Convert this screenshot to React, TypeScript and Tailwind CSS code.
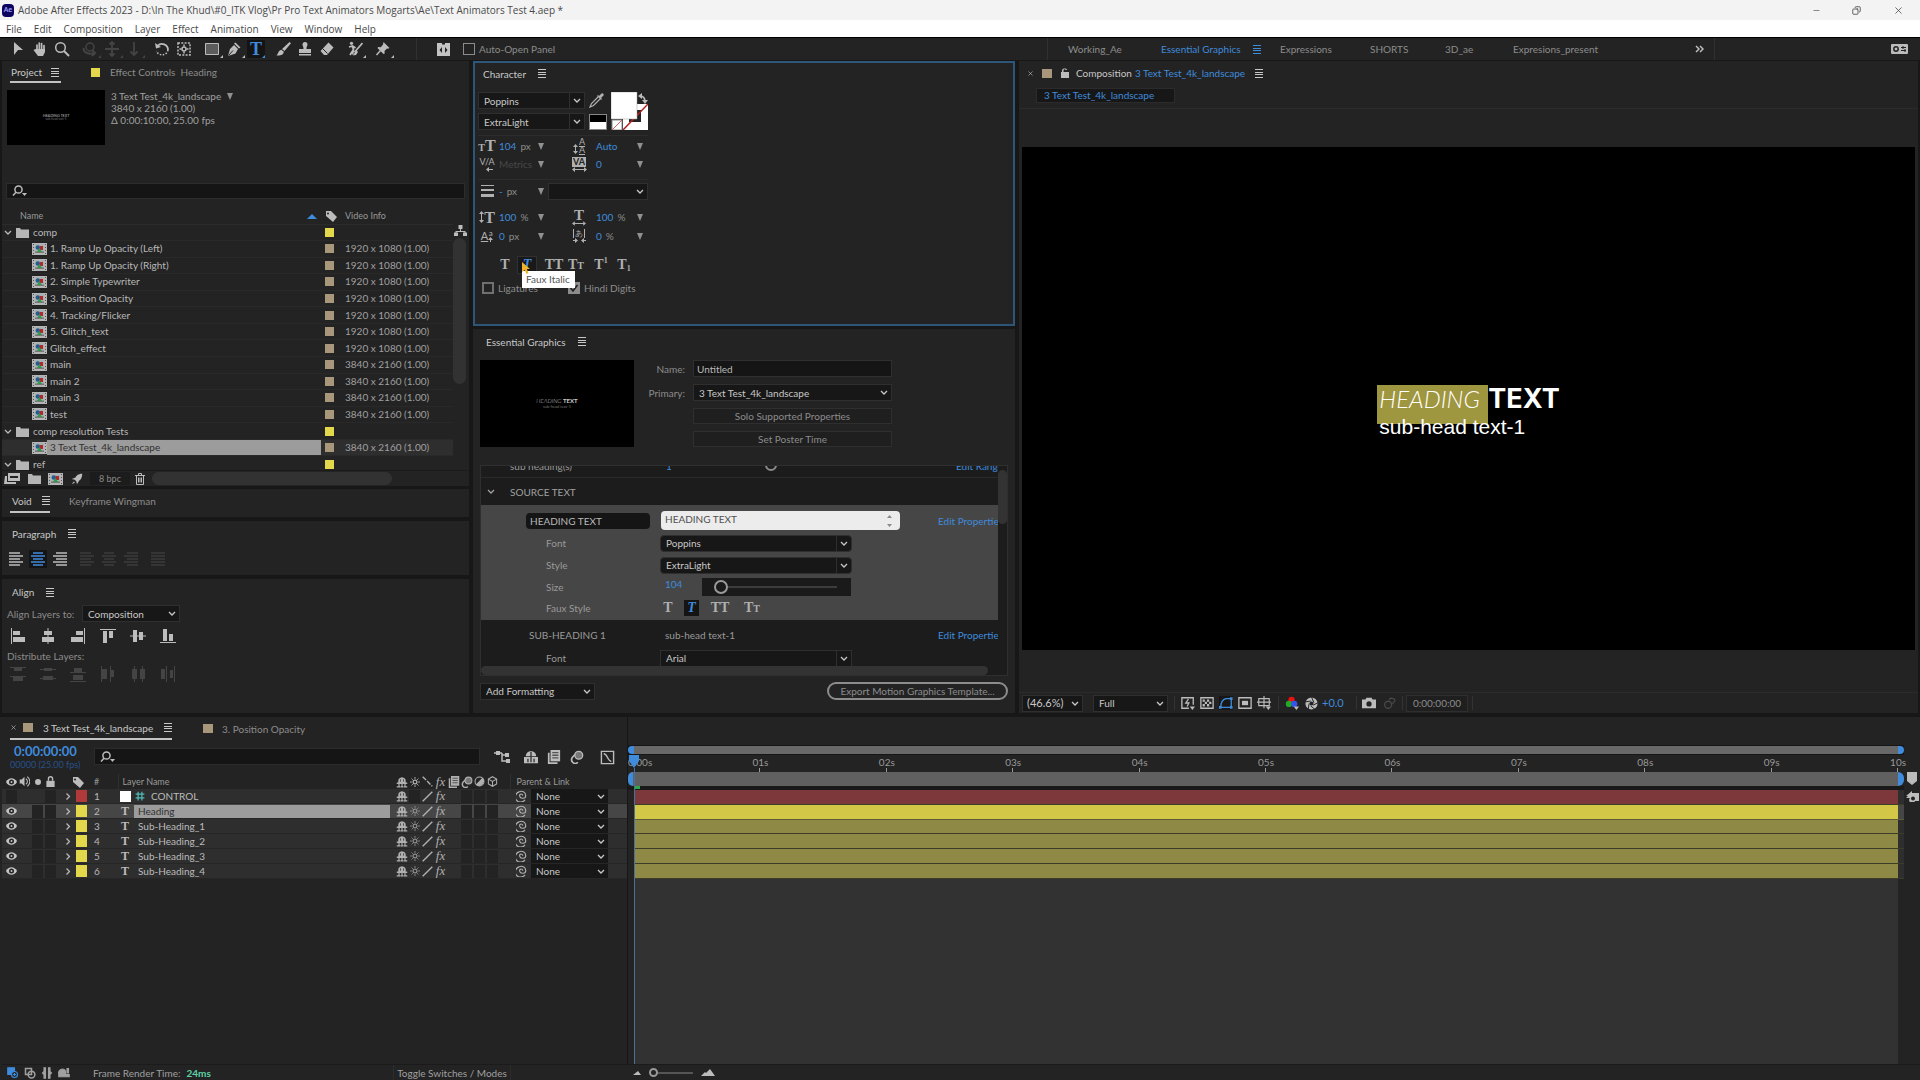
import { useState, type ReactNode } from "react";
import clsx from "clsx";
import { Minus, Copy, X } from "lucide-react";

const UI = "font-['Lato','Noto_Sans',sans-serif]";
const BLUE = "text-[#3f8bdc]";
const SERIF = "font-['Liberation_Serif',serif]";

interface SvgProps {
  children: ReactNode;
  className?: string;
  size?: number;
}

function Svg({ children, className, size = 16 }: SvgProps) {
  return (
    <svg
      width={size}
      height={size}
      viewBox="0 0 16 16"
      fill="none"
      stroke="currentColor"
      strokeWidth="1.5"
      className={clsx("shrink-0", className)}
      aria-hidden="true"
    >
      {children}
    </svg>
  );
}

function Chevron({ className }: { className?: string }) {
  return (
    <svg width="8" height="5" viewBox="0 0 8 5" fill="none" stroke="currentColor" strokeWidth="1.3" className={clsx("shrink-0", className)}>
      <path d="M1 1l3 3 3-3" />
    </svg>
  );
}

function Caret() {
  return (
    <svg width="6" height="7" viewBox="0 0 6 7" fill="currentColor" className="shrink-0 text-[#909090]">
      <path d="M0 0h6L3 7z" />
    </svg>
  );
}

function PanelMenu({ className }: { className?: string }) {
  return (
    <button aria-label="Panel menu" className={clsx("shrink-0", className)}>
      <svg width="8" height="9" viewBox="0 0 8 9" fill="currentColor">
        <path d="M0 0h8v1H0zM0 3h8v1H0zM0 5h8v1H0zM0 8h8v1H0z" />
      </svg>
    </button>
  );
}

interface SelectProps {
  label: string;
  value: string;
  className?: string;
  split?: boolean;
  textClass?: string;
}

function Select({ label, value, className, split, textClass = "pl-[5px]" }: SelectProps) {
  return (
    <div className={clsx("relative h-[17px] shrink-0 border border-[#2f2f2f] bg-[#171717] text-[#c8c8c8]", className)}>
      <select aria-label={label} defaultValue={value} className={clsx("block h-full w-full appearance-none bg-transparent leading-[14px] outline-none", textClass)}>
        <option>{value}</option>
      </select>
      <span className={clsx("pointer-events-none absolute inset-y-0 right-0 flex w-[15px] items-center justify-center", split && "border-l border-[#2f2f2f]")}>
        <Chevron />
      </span>
    </div>
  );
}

function SearchIcon() {
  return (
    <svg width="16" height="12" viewBox="0 0 16 12" fill="none" stroke="#bcbcbc" strokeWidth="1.5" aria-hidden="true">
      <circle cx="6.5" cy="4.5" r="3.6" />
      <path d="M4 7.2L1 10.6" />
      <path d="M10 8h5l-2.5 3z" fill="#bcbcbc" stroke="none" />
    </svg>
  );
}

function TagIcon() {
  return (
    <svg width="12" height="12" viewBox="0 0 12 12" fill="#bcbcbc" aria-hidden="true">
      <path fillRule="evenodd" d="M1 1l5 0 6 6-4 5-7-6zM3 2.4a1 1 0 100 2 1 1 0 000-2z" />
    </svg>
  );
}

function FolderIcon() {
  return (
    <svg width="13" height="11" viewBox="0 0 13 11" fill="#b5b5b5" aria-hidden="true" className="shrink-0">
      <path d="M0 1h4l1 1.5h8V11H0z" />
    </svg>
  );
}

function CompIcon() {
  return (
    <svg width="15" height="12" viewBox="0 0 15 12" aria-hidden="true" className="shrink-0">
      <path fill="#b5b5b5" d="M0 0h15v12H0z" />
      <path fill="#555" d="M1 1h1v1H1zM1 4h1v1H1zM1 7h1v1H1zM1 10h1v1H1zM13 1h1v1h-1zM13 4h1v1h-1zM13 7h1v1h-1zM13 10h1v1h-1z" />
      <path fill="#a9b0b4" d="M3 1h9v9H3z" />
      <path fill="#777" d="M3 8.5h9V10H3z" />
      <circle cx="5.8" cy="4.5" r="2.2" fill="#1f5f92" />
      <path fill="#b02a2a" d="M7.5 3H11v4H7.5z" />
      <path fill="#2f9a4a" d="M7.5 5L10 9H5z" />
    </svg>
  );
}

// ---------- window chrome ----------

function TitleBar() {
  return (
    <header className="font-['Open_Sans','Noto_Sans',sans-serif]">
      <div className="flex h-5 items-center bg-[#f3f3f3] pl-0.5 text-[#4a4a4a]">
        <span className="flex h-[13px] w-3 items-center justify-center rounded-sm bg-[#0c0560] text-[7px] font-semibold text-[#a9a5ff]">Ae</span>
        <h1 className="ml-1 flex-1 text-[10px] leading-5">Adobe After Effects 2023 - D:\In The Khud\#0_ITK Vlog\Pr Pro Text Animators Mogarts\Ae\Text Animators Test 4.aep *</h1>
        <div className="flex items-center text-[#333]">
          <button aria-label="Minimize" className="flex w-10 justify-center"><Minus size={9} strokeWidth={1.5} /></button>
          <button aria-label="Restore" className="flex w-10 justify-center"><Copy size={9} strokeWidth={2} className="-scale-x-100" /></button>
          <button aria-label="Close" className="flex w-11 justify-center"><X size={11} strokeWidth={1.5} /></button>
        </div>
      </div>
      <nav className="flex h-[17px] items-center gap-3 bg-white pl-1.5 text-[10px] leading-4 text-[#4a4a4a]">
        {["File", "Edit", "Composition", "Layer", "Effect", "Animation", "View", "Window", "Help"].map((m) => (
          <button key={m}>{m}</button>
        ))}
      </nav>
    </header>
  );
}

interface ToolProps {
  label: string;
  children: ReactNode;
  dim?: boolean;
  active?: boolean;
  more?: boolean;
  className?: string;
}

function Tool({ label, children, dim, active, more, className = "w-[22px]" }: ToolProps) {
  return (
    <button
      aria-label={label}
      title={label}
      className={clsx(
        "relative flex h-[18px] shrink-0 items-center justify-center",
        dim ? "text-[#444]" : active ? "bg-[#141414] text-[#3f8bdc]" : "text-[#bcbcbc]",
        className,
      )}
    >
      {children}
      {more && (
        <svg width="3" height="3" viewBox="0 0 3 3" fill="currentColor" className="absolute right-0 bottom-0">
          <path d="M3 0v3H0z" />
        </svg>
      )}
    </button>
  );
}

const WORKSPACES = [
  { name: "Working_Ae", width: "w-[93px]" },
  { name: "Essential Graphics", width: "w-[119px]", active: true },
  { name: "Expressions", width: "w-[90px]" },
  { name: "SHORTS", width: "w-[75px]" },
  { name: "3D_ae", width: "w-[68px]" },
  { name: "Expresions_present", width: "w-[100px]" },
];

function Toolbar() {
  return (
    <div className="flex h-[23px] items-center border-t border-black bg-[#232323]">
      <div className="flex items-center pl-[7px]">
        <Tool label="Selection Tool">
          <Svg><path d="M4 1l9 8H8l-4 5z" fill="currentColor" stroke="none" /></Svg>
        </Tool>
        <Tool label="Hand Tool">
          <Svg>
            <path d="M5 9V4M7.3 8V2M9.6 8V2.5M12 9V4.5" strokeWidth="1.7" strokeLinecap="round" />
            <path d="M4 8h9v3l-2 4H6L1.5 9l1.5-.8z" fill="currentColor" stroke="none" />
          </Svg>
        </Tool>
        <Tool label="Zoom Tool">
          <Svg><circle cx="6.5" cy="6.5" r="4.8" /><path d="M10 10l5 5" strokeWidth="2" /></Svg>
        </Tool>
        <Tool label="Orbit Tool" dim more className="ml-1.5 w-[22px]">
          <Svg><circle cx="8" cy="6" r="4" /><path d="M2 7c-2 4 5 7 10 5M10 9l3 3-3 3" strokeWidth="2" /></Svg>
        </Tool>
        <Tool label="Pan Camera Tool" dim more>
          <Svg><path d="M8 1v14M1 8h14M5.5 3.5L8 1l2.5 2.5M5.5 12.5L8 15l2.5-2.5" strokeWidth="1.8" /></Svg>
        </Tool>
        <Tool label="Dolly Tool" dim more>
          <Svg><path d="M8 1v13M4.5 10.5L8 14l3.5-3.5" strokeWidth="1.8" /></Svg>
        </Tool>
        <Tool label="Rotation Tool" className="ml-1.5 w-[22px]">
          <Svg>
            <path d="M3.5 5A6 6 0 0114 9" strokeWidth="1.8" />
            <path d="M14 9A6 6 0 012.5 10" strokeDasharray="1.5 1.5" />
            <path d="M1 2l1 5.5L7 6z" fill="currentColor" stroke="none" />
          </Svg>
        </Tool>
        <Tool label="Pan Behind Tool">
          <Svg>
            <path d="M2 2h12v12H2z" strokeDasharray="2 1.3" />
            <circle cx="8" cy="8" r="2" />
            <path d="M8 3.5v2M8 10.5v2M3.5 8h2M10.5 8h2" />
          </Svg>
        </Tool>
        <Tool label="Rectangle Tool" more className="ml-1.5 w-[22px]">
          <Svg><path d="M1.5 2.5h13v11h-13z" fill="#5c5c5c" strokeWidth="1" /></Svg>
        </Tool>
        <Tool label="Pen Tool" more>
          <Svg>
            <path d="M9.5 1.5l5 5-1.5 1-5-5zM8 4l4 4-2.5 4.5L2 15l2-7z" fill="currentColor" stroke="none" />
            <path d="M2.5 14.5l4.5-5" stroke="#232323" strokeWidth="1" />
          </Svg>
        </Tool>
        <Tool label="Type Tool" active more className="ml-0.5 w-[18px]">
          <span className={clsx(SERIF, "text-[18px] leading-4 font-bold")}>T</span>
        </Tool>
        <Tool label="Brush Tool" className="ml-[7px] w-[22px]">
          <Svg><path d="M14.5 1L16 2.2 9.5 10 7 8zM6.3 8.8l2.5 2C8.5 14 5 15 1.5 14.5 3.5 13 3 9.5 6.3 8.8z" fill="currentColor" stroke="none" /></Svg>
        </Tool>
        <Tool label="Clone Stamp Tool">
          <Svg><path d="M8 1a2.5 2.5 0 012.5 2.5C10.5 5 9.5 5 9.5 8H14v4H2V8h4.5c0-3-1-3-1-4.5A2.5 2.5 0 018 1zM2 13h12v1.5H2z" fill="currentColor" stroke="none" /></Svg>
        </Tool>
        <Tool label="Eraser Tool">
          <Svg><path d="M9.5 1.5l5 5L8 14H5L1.5 10z" fill="currentColor" stroke="none" /><path d="M3.5 7.5l5 5" stroke="#232323" strokeWidth="1" /></Svg>
        </Tool>
        <Tool label="Roto Brush Tool" more className="ml-1.5 w-[22px]">
          <Svg>
            <path d="M15.5 2L9 9.5 7.5 11M5 4.5l1.5 4-1 5M2 6l3.5-1 3 2M6.5 8.5L3 14" strokeWidth="1.7" />
            <circle cx="4.5" cy="2.3" r="1.6" fill="currentColor" stroke="none" />
            <path d="M9 9l2 2-2 3-3 .5z" fill="currentColor" stroke="none" />
          </Svg>
        </Tool>
        <Tool label="Puppet Pin Tool" more className="ml-1.5 w-[22px]">
          <Svg><path d="M8.5 1l6 6-1.5.8-1-.3L9.5 10l.2 2.5L8.5 13l-6-6 .8-1 2.5.2L8 3.500z" fill="currentColor" stroke="none" /><path d="M5.5 9.500L1.500 14" /></Svg>
        </Tool>
      </div>
      <div className="ml-[22px] h-full w-px bg-[#303030]" />
      <button aria-label="Tool panel" className="ml-5">
        <svg width="13" height="13" viewBox="0 0 13 13" fill="#c4c4c4">
          <path fillRule="evenodd" d="M0 0h5v1.5h3V0h5v13H0zM5 4L2.5 7 5 10zM8 4v6l2.500-3z" />
        </svg>
      </button>
      <label className="ml-[13px] flex items-center gap-1 text-[#8c8c8c]">
        <input type="checkbox" className="size-3 appearance-none border border-[#8c8c8c]" />
        Auto-Open Panel
      </label>
      <div className="flex-1" />
      {/* workspace switcher keeps its distance from the right edge */}
      <nav className="flex h-full w-[873px] shrink-0 items-center border-l border-[#303030] pl-5 text-[#8c8c8c]">
        {WORKSPACES.map((w) => (
          <span key={w.name} className={clsx("flex items-center justify-between", w.width)}>
            <button className={w.active ? BLUE : undefined}>{w.name}</button>
            {w.active && <PanelMenu className="mr-[19px] text-[#3f8bdc]" />}
          </span>
        ))}
        <button aria-label="More workspaces" className="ml-auto text-[#bcbcbc]">
          <svg width="9" height="8" viewBox="0 0 9 8" fill="none" stroke="currentColor" strokeWidth="1.5"><path d="M1 1l3 3-3 3M5 1l3 3-3 3" /></svg>
        </button>
        <div className="ml-2.5 h-full w-px bg-[#303030]" />
        <button aria-label="Sync settings" className="mr-3 ml-[176px]">
          <svg width="17" height="10" viewBox="0 0 17 10">
            <rect width="17" height="10" rx="1" fill="#bcbcbc" />
            <circle cx="5" cy="5" r="2.2" fill="none" stroke="#232323" strokeWidth="1.5" />
            <path d="M10 3.5h5M10 6.5h5M12 2v3M14 5v3" stroke="#232323" />
          </svg>
        </button>
      </nav>
    </div>
  );
}

// ---------- left column ----------

type Item = { name: string; kind: "folder" | "comp"; info?: string; selected?: boolean };

const HD = "1920 x 1080 (1.00)";
const UHD = "3840 x 2160 (1.00)";

const ITEMS: Item[] = [
  { name: "comp", kind: "folder" },
  { name: "1. Ramp Up Opacity (Left)", kind: "comp", info: HD },
  { name: "1. Ramp Up Opacity (Right)", kind: "comp", info: HD },
  { name: "2. Simple Typewriter", kind: "comp", info: HD },
  { name: "3. Position Opacity", kind: "comp", info: HD },
  { name: "4. Tracking/Flicker", kind: "comp", info: HD },
  { name: "5. Glitch_text", kind: "comp", info: HD },
  { name: "Glitch_effect", kind: "comp", info: HD },
  { name: "main", kind: "comp", info: UHD },
  { name: "main 2", kind: "comp", info: UHD },
  { name: "main 3", kind: "comp", info: UHD },
  { name: "test", kind: "comp", info: UHD },
  { name: "comp resolution Tests", kind: "folder" },
  { name: "3 Text Test_4k_landscape", kind: "comp", info: UHD, selected: true },
  { name: "ref", kind: "folder" },
];

function ProjectRow({ item }: { item: Item }) {
  const folder = item.kind === "folder";
  return (
    <tr className={clsx("border-b border-[#292929]", item.selected && "bg-[#2e2e2e]")}>
      <td className="p-0">
        <div className={clsx("flex items-center text-[#b8b8b8]", folder ? "pl-0.5" : "pl-[30px]")}>
          {folder && <Chevron className="mr-1" />}
          {folder ? <FolderIcon /> : <CompIcon />}
          <span className={clsx("flex-1 leading-[15px]", folder ? "pl-1" : "pl-[3px]", item.selected && "mr-1 bg-[#9c9c9c] text-[#303030]")}>{item.name}</span>
        </div>
      </td>
      <td className="p-0">
        <span className={clsx("block size-[9px]", folder ? "bg-[#e3d84c]" : "bg-[#a8977a]")} />
      </td>
      <td className="p-0 leading-[15px] text-[#a0a0a0]">{item.info}</td>
    </tr>
  );
}

function ProjectPanel() {
  return (
    <section className="flex h-[425px] flex-col bg-[#232323]">
      <div className="flex h-[22px] items-center px-2">
        <div className="flex h-[22px] w-[51px] items-center justify-between border-b-2 border-[#c4c4c4] pt-0.5 pr-0.5 pl-px text-[#c8c8c8]">
          Project <PanelMenu />
        </div>
        <span className="ml-[30px] size-[9px] bg-[#e3d84c]" />
        <span className="ml-2.5 text-[#8c8c8c]">Effect Controls&nbsp; Heading</span>
      </div>
      <div className="mt-[7px] flex h-[55px] px-[5px]">
        <div className="flex w-[98px] flex-col items-center justify-center bg-black text-[4px] leading-[4px] text-[#bbb]">
          <span className="italic">HEADING TEXT</span>
          <span className="text-[3px] leading-[3px] text-[#777]">sub-head text-1</span>
        </div>
        <div className="ml-1.5 leading-[12px] text-[#a0a0a0]">
          <button className="flex items-center gap-1.5">3 Text Test_4k_landscape <Caret /></button>
          <p>3840 x 2160 (1.00)</p>
          <p>Δ 0:00:10:00, 25.00 fps</p>
        </div>
      </div>
      <label className="mx-1 mt-[38px] flex h-4 items-center border border-[#2c2c2c] bg-[#151515] pl-[5px]">
        <SearchIcon />
        <input aria-label="Search project" className="min-w-0 flex-1 bg-transparent outline-none" />
      </label>
      <div className="mt-2.5 flex min-h-0 flex-1">
        <div className="min-w-0 flex-1 overflow-hidden">
          <table className="h-[264px] w-full table-fixed border-collapse">
            <colgroup>
              <col />
              <col className="w-5" />
              <col className="w-[108px]" />
            </colgroup>
            <thead>
              <tr className="h-[15px] border-b border-[#2b2b2b] text-left text-[9px] text-[#999]">
                <th className="p-0 pl-[18px] font-normal">
                  <span className="flex items-center justify-between">
                    Name
                    <svg width="10" height="5" viewBox="0 0 10 5" fill="#3f8bdc" className="mr-2"><path d="M5 0l5 5H0z" /></svg>
                  </span>
                </th>
                <th aria-label="Label" className="p-0"><TagIcon /></th>
                <th className="p-0 font-normal">Video Info</th>
              </tr>
            </thead>
            <tbody>
              {ITEMS.map((item) => (
                <ProjectRow key={item.name} item={item} />
              ))}
            </tbody>
          </table>
        </div>
        <div className="w-4 pt-4">
          <svg width="13" height="11" viewBox="0 0 13 11" fill="#bcbcbc" className="ml-px">
            <path d="M4.5 0h4v4H7v2h4.5v1.5H13V11H9V7.5h1.5V7h-8v.5H4V11H0V7.500h1.500V6H6V4H4.500z" />
          </svg>
          <div className="mt-0.5 h-[146px] w-[13px] rounded-full bg-[#323232]" />
        </div>
      </div>
      <div className="flex h-4 items-center border-t border-[#1b1b1b] pl-0.5 text-[#bcbcbc]">
        <button aria-label="Interpret footage">
          <svg width="16" height="11" viewBox="0 0 16 11" fill="currentColor"><path fillRule="evenodd" d="M4 0h12v8H4zM6 3v2h8V3z" /><path d="M1 3h2v6h9v2H0z" /></svg>
        </button>
        <button aria-label="New folder" className="ml-2"><FolderIcon /></button>
        <button aria-label="New composition" className="ml-[7px]"><CompIcon /></button>
        <button aria-label="Project settings" className="ml-2">
          <Svg size={12}><path d="M15 1c-6 0-8 3-9 5L1 8l4 1 2 2 1 4 3-5c2-1 4-4 4-9zM4 11l-3 4 4-2z" fill="currentColor" stroke="none" /></Svg>
        </button>
        <button className="ml-[7px] h-[13px] w-10 bg-[#1c1c1c] text-[9px] leading-[13px] text-[#8c8c8c]">8 bpc</button>
        <button aria-label="Delete" className="ml-[5px]">
          <svg width="10" height="12" viewBox="0 0 10 12" fill="none" stroke="currentColor"><path d="M0 2.5h10M3.5 2V.5h3V2M1.5 3v8.5h7V3M3.5 4.5v5M5 4.5v5M6.5 4.5v5" /></svg>
        </button>
        <div className="ml-[7px] h-[13px] w-[240px] rounded-full bg-[#323232]" />
      </div>
    </section>
  );
}

function AlignLines({ d }: { d: string }) {
  return (
    <svg width="14" height="14" viewBox="0 0 14 14" stroke="currentColor" strokeWidth="1.3">
      <path d={d} />
    </svg>
  );
}

const LEFT_LINES = "M0 1h11M0 4h14M0 7h11M0 10h14M0 13h11";
const CENTER_LINES = "M2 1h10M0 4h14M2 7h10M0 10h14M2 13h10";
const RIGHT_LINES = "M3 1h11M0 4h14M3 7h11M0 10h14M3 13h11";

function ParagraphPanel() {
  const buttons = [
    { label: "Left align text", d: LEFT_LINES },
    { label: "Center text", d: CENTER_LINES, active: true },
    { label: "Right align text", d: RIGHT_LINES },
    { label: "Justify last left", d: LEFT_LINES, dim: true, gap: "ml-[5px]" },
    { label: "Justify last centered", d: CENTER_LINES, dim: true },
    { label: "Justify last right", d: RIGHT_LINES, dim: true },
    { label: "Justify all", d: "M0 1h14M0 4h14M0 7h14M0 10h14M0 13h14", dim: true, gap: "ml-[5px]" },
  ];
  return (
    <section className="h-[54px] bg-[#232323]">
      <PanelTitle className="h-[25px] pl-2.5">Paragraph</PanelTitle>
      <div className="flex pt-1 pl-[5px]">
        {buttons.map((b) => (
          <button
            key={b.label}
            aria-label={b.label}
            disabled={b.dim}
            className={clsx(
              "mr-1 flex h-[18px] w-[18px] items-center justify-center",
              b.gap,
              b.active ? "bg-[#151515] text-[#3f8bdc]" : b.dim ? "text-[#3c3c3c]" : "text-[#bcbcbc]",
            )}
          >
            <AlignLines d={b.d} />
          </button>
        ))}
      </div>
    </section>
  );
}

function PanelTitle({ children, className }: { children: ReactNode; className?: string }) {
  return (
    <h2 className={clsx("flex items-center gap-3 text-[#c8c8c8]", className)}>
      {children} <PanelMenu />
    </h2>
  );
}

const ALIGN = [
  "M1 0h1v16H1zM3 3h7v4H3zM3 9h12v5H3z",
  "M7.5 0h1v16h-1zM4 3h8v4H4zM2 9h12v5H2z",
  "M14 0h1v16h-1zM6 3h7v4H6zM1 9h12v5H1z",
  "M0 1h16v1H0zM3 3h4v12H3zM9 3h4v7H9z",
  "M0 7.5h16v1H0zM3 2h4v12H3zM9 4h4v8H9z",
  "M0 14h16v1H0zM3 1h4v12H3zM9 6h4v7H9z",
];
const DISTRIBUTE = [
  "M0 1h16v1H0zM4 2h8v3H4zM0 10h16v1H0zM3 11h10v4H3z",
  "M0 3h16v1H0zM4 2h8v3H4zM0 12h16v1H0zM3 10h10v4H3z",
  "M0 6h16v1H0zM4 2h8v4H4zM0 15h16v1H0zM3 9h10v5H3z",
  "M1 0h1v16H1zM2 3h5v10H2zM10 0h1v16h-1zM11 4h3v7h-3z",
  "M4 0h1v16H4zM2 3h5v10H2zM12 0h1v16h-1zM10 3h5v10h-5z",
  "M1 3h4v10H1zM6 0h1v16H6zM10 4h3v8h-3zM14 0h1v16h-1z",
];

function AlignPanel() {
  return (
    <section className="h-[134px] bg-[#232323]">
      <PanelTitle className="h-[26px] pl-2.5">Align</PanelTitle>
      <div className="flex items-center pl-[5px] text-[#8c8c8c]">
        <span className="w-[75px]">Align Layers to:</span>
        <Select label="Align layers to" value="Composition" className="w-[98px]" />
      </div>
      <div className="mt-1.5 flex gap-3.5 pl-2 text-[#bcbcbc]">
        {ALIGN.map((d) => (
          <button key={d} aria-label="Align"><Svg><path d={d} fill="currentColor" stroke="none" /></Svg></button>
        ))}
      </div>
      <p className="mt-[5px] pl-[5px] text-[#8c8c8c]">Distribute Layers:</p>
      <div className="mt-[3px] flex gap-3.5 pl-2 text-[#444]">
        {DISTRIBUTE.map((d) => (
          <button key={d} aria-label="Distribute" disabled><Svg><path d={d} fill="currentColor" stroke="none" /></Svg></button>
        ))}
      </div>
    </section>
  );
}

// ---------- middle column ----------

interface ValueProps {
  label: string;
  icon: ReactNode;
  value: string;
  unit?: string;
  dim?: boolean;
  second?: boolean;
}

function CharValue({ label, icon, value, unit, dim, second }: ValueProps) {
  return (
    <div className="flex h-[18px] items-center">
      <span className={clsx("flex w-[18px] shrink-0 justify-center text-[#b0b0b0]", second ? "mr-2" : "mr-[3px]")}>{icon}</span>
      <button aria-label={label} className={clsx(dim ? "text-[#484848]" : BLUE)}>{value}</button>
      <span className="ml-1 flex-1 text-[#8c8c8c]">{unit}</span>
      <button aria-label={`${label} presets`}><Caret /></button>
    </div>
  );
}

function SizeIcon() {
  return <span className={clsx(SERIF, "flex items-baseline leading-[15px] font-bold")}><span className="text-[10px]">T</span><span className="text-[16px]">T</span></span>;
}

function KerningIcon({ boxed }: { boxed?: boolean }) {
  return (
    <span className="flex flex-col items-center">
      <span className={clsx("text-[9px] leading-[10px]", boxed && "bg-[#b0b0b0] px-px font-bold text-[#232323]")}>{boxed ? "VA" : "V/A"}</span>
      <svg width="15" height="5" viewBox="0 0 15 5" fill="currentColor">
        {boxed ? <path d="M0 2.5L3 0v2h9V0l3 2.5L12 5V3H3v2z" /> : <path d="M7 2.5L10 0v2h4v1h-4v2z" />}
      </svg>
    </span>
  );
}

function LeadingIcon() {
  return (
    <span className="flex items-end gap-px text-[9px] leading-[8px]">
      <svg width="5" height="10" viewBox="0 0 5 10" fill="currentColor"><path d="M2.5 0L5 3H3v4h2l-2.5 3L0 7h2V3H0z" /></svg>
      <span className="flex flex-col"><u>A</u><u>A</u></span>
    </span>
  );
}

function FauxButtons() {
  return (
    <div className={clsx(SERIF, "flex items-center text-[14px] leading-4 font-bold text-[#b0b0b0]")}>
      <button aria-label="Faux Bold" className="w-5">T</button>
      <button aria-label="Faux Italic" aria-pressed="true" className="ml-1.5 h-4 w-[15px] bg-[#141414] text-[#3f8bdc] italic">T</button>
      <button aria-label="All Caps" className="ml-[11px] w-5">TT</button>
      <button aria-label="Small Caps" className="ml-3 w-5">T<span className="text-[10px]">T</span></button>
    </div>
  );
}

function CharacterPanel() {
  return (
    <section className="h-[265px] border-2 border-[#2d5679] bg-[#232323] pl-[3px]">
      <PanelTitle className="h-[21px] gap-2.5 pl-[5px]">Character</PanelTitle>
      <div className="mt-2 flex h-[38px]">
        <div className="flex w-[107px] flex-col gap-1">
          <Select label="Font family" value="Poppins" split />
          <Select label="Font style" value="ExtraLight" split />
        </div>
        <div className="ml-1 flex w-[18px] flex-col justify-between">
          <button aria-label="Eyedropper" className="text-[#b0b0b0]">
            <Svg><path d="M9 5L2.5 11.5 1 15l3.5-1.5L11 7" strokeWidth="1.2" /><path d="M8 4l4 4 1-1-1-1 2.5-2.5C15.5 2.5 13.5.5 12.5 1.5L10 4 9 3z" fill="currentColor" stroke="none" /></Svg>
          </button>
          <button aria-label="Set to black" className="flex h-4 w-[18px] flex-col border border-[#888] bg-white">
            <span className="h-[7px] w-full bg-black" />
          </button>
        </div>
        <svg width="37" height="38" viewBox="0 0 37 38" aria-label="Fill and stroke colour" className="ml-1">
          <path d="M12 12h25v26H12z" fill="#fff" />
          <path d="M18 18h12v12H18z" fill="#232323" />
          <path d="M12 38L37 12" stroke="#b21f1f" strokeWidth="1.5" />
          <path d="M0 0h26v27H0z" fill="#fff" stroke="#999" strokeWidth=".5" />
          <path d="M1 28h10v10H1z" fill="#fff" stroke="#888" />
          <path d="M1 38l10-10" stroke="#c66" />
          <path d="M29 4c4 0 5 2 5 6" stroke="#bcbcbc" strokeWidth="1.7" fill="none" />
          <path d="M27 4l4-3v6zM31 8h6l-3 4z" fill="#bcbcbc" />
        </svg>
      </div>
      <div className="mt-[5px] grid w-[170px] grid-cols-[66px_73px] gap-x-[26px] border-y border-[#2c2c2c] pt-px pb-1.5">
        <CharValue label="Font size" icon={<SizeIcon />} value="104" unit="px" />
        <CharValue label="Leading" icon={<LeadingIcon />} value="Auto" second />
        <CharValue label="Kerning" icon={<KerningIcon />} value="Metrics" dim />
        <CharValue label="Tracking" icon={<KerningIcon boxed />} value="0" second />
      </div>
      <div className="mt-0.5 flex items-center">
        <div className="w-[66px]">
          <CharValue label="Stroke width" icon={<svg width="13" height="12" viewBox="0 0 13 12" fill="currentColor"><path d="M0 0h13v1H0zM0 4h13v2H0zM0 9h13v3H0z" /></svg>} value="-" unit="px" />
        </div>
        <Select label="Stroke order" value="" className="ml-1 w-[100px]" />
      </div>
      <div className="mt-2 grid grid-cols-[66px_73px] gap-x-[26px] gap-y-px">
        <CharValue
          label="Vertical scale"
          icon={<span className={clsx(SERIF, "flex items-center text-[16px] leading-[15px] font-bold")}><svg width="5" height="12" viewBox="0 0 5 12" fill="currentColor"><path d="M2.5 0L5 3H3v6h2l-2.5 3L0 9h2V3H0z" /></svg>T</span>}
          value="100"
          unit="%"
        />
        <CharValue
          label="Horizontal scale"
          icon={<span className={clsx(SERIF, "flex flex-col items-center text-[15px] leading-[12px] font-bold")}>T<svg width="14" height="5" viewBox="0 0 15 5" fill="currentColor"><path d="M0 2.5L3 0v2h9V0l3 2.5L12 5V3H3v2z" /></svg></span>}
          value="100"
          unit="%"
          second
        />
        <CharValue
          label="Baseline shift"
          icon={<span className="flex items-end text-[11px] leading-3"><u>A</u><span className="flex flex-col items-center text-[8px] leading-[7px]">a<svg width="5" height="5" viewBox="0 0 5 5" fill="currentColor"><path d="M2.5 0L5 3H3v2H2V3H0z" /></svg></span></span>}
          value="0"
          unit="px"
        />
        <CharValue
          label="Tsume"
          icon={<span className="flex flex-col items-center"><span className="border-x border-[#b0b0b0] px-px text-[8px] leading-[9px]">あ</span><svg width="13" height="5" viewBox="0 0 13 5" fill="currentColor"><path d="M5 2.5L2 0v2H0v1h2v2zM8 2.5L11 0v2h2v1h-2v2z" /></svg></span>}
          value="0"
          unit="%"
          second
        />
      </div>
      <div className="relative">
        <div className={clsx(SERIF, "mt-[11px] flex items-center pl-[17px] text-[14px] leading-4 font-bold text-[#b0b0b0]")}>
          <button aria-label="Faux Bold" className="w-5">T</button>
          <button aria-label="Faux Italic" aria-pressed="true" className="ml-0.5 h-[18px] w-5 border border-[#303030] bg-[#191919] text-[#3f8bdc] italic">T</button>
          <button aria-label="All Caps" className="ml-[7px] w-5">TT</button>
          <button aria-label="Small Caps" className="ml-0.5 w-5">T<span className="text-[10px]">T</span></button>
          <button aria-label="Superscript" className="ml-[5px] flex w-5 justify-center">T<sup className="top-0 text-[8px] leading-2">1</sup></button>
          <button aria-label="Subscript" className="ml-[3px] flex w-5 justify-center">T<sub className="bottom-0 self-end text-[8px] leading-2">1</sub></button>
        </div>
        <div className="mt-[7px] flex items-center pl-1 text-[#8c8c8c]">
          <label className="flex w-[86px] items-center gap-1">
            <input type="checkbox" className="size-3 appearance-none border-2 border-[#707070]" />
            Ligatures
          </label>
          <label className="flex items-center gap-1">
            <span className="relative flex size-3">
              <input type="checkbox" defaultChecked className="size-3 appearance-none bg-[#8c8c8c]" />
              <svg width="12" height="12" viewBox="0 0 12 12" fill="none" stroke="#222" strokeWidth="1.7" className="pointer-events-none absolute inset-0"><path d="M2.5 6l2.5 3 4.5-6" /></svg>
            </span>
            Hindi Digits
          </label>
        </div>
        <div role="tooltip" className="absolute top-[15px] left-11 z-10 h-[17px] w-[53px] bg-white pl-1 leading-4 text-[#555]">Faux Italic</div>
        <svg width="8" height="12" viewBox="0 0 8 12" className="absolute top-1.5 left-11 z-20" aria-hidden="true">
          <path d="M0 0l8 7H4.8L6.5 11l-2 1-1.7-4L0 10z" fill="#f0b429" />
        </svg>
      </div>
    </section>
  );
}

function PropertyLabel({ children }: { children: ReactNode }) {
  return <span className="w-[114px] shrink-0 text-[#999]">{children}</span>;
}

function EssentialGraphicsPanel() {
  const [heading, setHeading] = useState("HEADING TEXT");
  return (
    <section className="flex h-[384px] flex-col bg-[#232323] px-[7px]">
      <PanelTitle className="h-[25px] pl-1.5">Essential Graphics</PanelTitle>
      <div className="mt-1.5 flex">
        <div className="flex h-[87px] w-[154px] flex-col items-center justify-center bg-black text-[6px] leading-[6px] text-[#ccc]">
          <span><i className="font-light">HEADING</i> <b>TEXT</b></span>
          <span className="text-[4px] leading-[5px] text-[#777]">sub-head text-1</span>
        </div>
        <div className="grid grid-cols-[51px_199px] items-center gap-x-2 gap-y-[7px] text-[#8c8c8c]">
          <label htmlFor="eg-name" className="text-right">Name:</label>
          <input id="eg-name" defaultValue="Untitled" className="h-[17px] border border-[#2f2f2f] bg-[#151515] pl-[3px] text-[#b8b8b8] outline-none" />
          <span className="text-right">Primary:</span>
          <Select label="Primary" value="3 Text Test_4k_landscape" className="bg-[#1d1d1d]" />
          <button className="col-start-2 h-[16px] border border-[#2f2f2f] bg-[#1f1f1f]">Solo Supported Properties</button>
          <button className="col-start-2 h-[16px] border border-[#2f2f2f] bg-[#1f1f1f]">Set Poster Time</button>
        </div>
      </div>
      <div className="relative mt-[18px] flex h-[211px] overflow-hidden border border-[#2f2f2f] bg-[#1c1c1c]">
        <div className="flex h-[201px] min-w-0 flex-1 flex-col overflow-hidden whitespace-nowrap">
          <div className="flex h-3 shrink-0 items-end border-b border-[#2a2a2a] pl-[29px] text-[#999]">
            <span className="mb-[4px] w-[156px] leading-[14px]">sub heading(s)</span>
            <span className={clsx("mb-[4px] w-[99px] leading-[14px]", BLUE)}>1</span>
            <span className="mb-1.5 size-3 rounded-full border-2 border-[#8c8c8c]" />
            <a href="#range" className={clsx("mb-[4px] ml-auto w-[42px] leading-[14px]", BLUE)}>Edit Range</a>
          </div>
          <div className="flex h-[27px] shrink-0 items-center pl-1.5 text-[#a0a0a0]">
            <Chevron />
            <span className="pl-[15px]">SOURCE TEXT</span>
          </div>
          <div className="flex h-[115px] shrink-0 flex-col bg-[#464646] pt-1.5">
            <div className="flex h-[19px] items-center pl-[45px]">
              <input aria-label="Property name" defaultValue="HEADING TEXT" className="h-4 w-[124px] shrink-0 rounded-sm bg-[#151515] pl-1 text-[#b8b8b8] outline-none" />
              <div className="relative ml-[11px] h-[19px] w-[239px] shrink-0">
                <textarea
                  aria-label="Source text"
                  value={heading}
                  onChange={(e) => setHeading(e.target.value)}
                  className="block h-full w-full resize-none overflow-hidden rounded-sm bg-[#ececec] pl-1 leading-4 text-[#505050] outline-none"
                />
                <svg width="5" height="12" viewBox="0 0 5 12" fill="#8a8a8a" className="absolute top-1 right-2"><path d="M2.5 0L5 3H0zM2.5 12L5 9H0z" /></svg>
              </div>
              <a href="#props" className={clsx("ml-[38px]", BLUE)}>Edit Properties</a>
            </div>
            <div className="mt-1 flex h-[18px] items-center pl-[65px]">
              <PropertyLabel>Font</PropertyLabel>
              <Select label="Font" value="Poppins" split className="w-[192px] rounded-sm" />
            </div>
            <div className="mt-1 flex h-[18px] items-center pl-[65px]">
              <PropertyLabel>Style</PropertyLabel>
              <Select label="Style" value="ExtraLight" split className="w-[192px] rounded-sm" />
            </div>
            <div className="mt-[3px] flex h-[19px] items-center pl-[65px]">
              <PropertyLabel>Size</PropertyLabel>
              <button className={clsx("w-[42px] self-start pl-[5px] text-left", BLUE)}>104</button>
              <input
                type="range"
                aria-label="Size"
                defaultValue="2"
                className="h-[18px] w-[149px] appearance-none bg-[#1a1a1a] bg-[linear-gradient(#3c3c3c,#3c3c3c)] bg-[length:120px_2px] bg-center bg-no-repeat px-2.5 [&::-webkit-slider-thumb]:size-[14px] [&::-webkit-slider-thumb]:appearance-none [&::-webkit-slider-thumb]:rounded-full [&::-webkit-slider-thumb]:border-2 [&::-webkit-slider-thumb]:border-[#999] [&::-webkit-slider-thumb]:bg-[#1a1a1a]"
              />
            </div>
            <div className="mt-1 flex h-4 items-center pl-[65px]">
              <span className="w-[112px] shrink-0 text-[#999]">Faux Style</span>
              <FauxButtons />
            </div>
          </div>
          <div className="flex h-[29px] shrink-0 items-center pl-12 text-[#999]">
            <span className="w-[136px] shrink-0">SUB-HEADING 1</span>
            <span className="w-[273px] shrink-0">sub-head text-1</span>
            <a href="#props" className={BLUE}>Edit Properties</a>
          </div>
          <div className="flex h-[18px] shrink-0 items-center pl-[65px]">
            <PropertyLabel>Font</PropertyLabel>
            <Select label="Sub-heading font" value="Arial" split className="w-[192px]" />
          </div>
        </div>
        <div className="mt-1 h-[54px] w-[9px] rounded-full bg-[#333]" />
        <div className="absolute bottom-0 left-0 h-[9px] w-[507px] rounded-full bg-[#333]" />
      </div>
      <div className="mt-1.5 flex items-center justify-between">
        <Select label="Add Formatting" value="Add Formatting" className="w-[115px] bg-[#1d1d1d]" />
        <button className="h-[18px] w-[181px] rounded-full border-2 border-[#8c8c8c] leading-[13px] text-[#8c8c8c]">Export Motion Graphics Template...</button>
      </div>
    </section>
  );
}

// ---------- composition viewer ----------

function Sep() {
  return <span className="h-3.5 w-px bg-[#333]" />;
}

function ViewerPanel() {
  return (
    <section className="flex min-w-0 flex-1 flex-col bg-[#232323]">
      <div className="flex h-6 items-center pl-2 text-[#c8c8c8]">
        <button aria-label="Close tab"><X size={7} /></button>
        <span className="ml-2 h-[9px] w-2.5 bg-[#a8977a]" />
        <svg width="8" height="10" viewBox="0 0 8 10" className="ml-[9px]" fill="#bcbcbc"><path d="M0 4h1V2.5C1 0 6 0 6 2H4.8C4.5 1 2.5 1 2.5 2.5V4H8v6H0z" /></svg>
        <span className="ml-[7px]">Composition</span>
        <span className={clsx("ml-[3px]", BLUE)}>3 Text Test_4k_landscape</span>
        <PanelMenu className="ml-2.5" />
      </div>
      <div className="flex h-6 border-b border-[#2b2b2b] pt-[3px] pl-[17px]">
        <button className={clsx("h-[15px] w-[139px] border border-[#2b2b2b] bg-[#171717] pl-[7px] text-left leading-[13px]", BLUE)}>3 Text Test_4k_landscape</button>
      </div>
      <div className="mx-[3px] mt-[38px] flex flex-1 items-center justify-center bg-black pt-[22px]">
        <div>
          <p className="flex h-[39px] text-white">
            <span className="h-full w-[111px] bg-[#9f9640] pl-0.5 font-['Lato',sans-serif] text-[24px] leading-7 font-light italic">HEADING</span>
            <span className="font-['Inter',sans-serif] text-[27px] leading-7 font-bold">TEXT</span>
          </p>
          <p className="-mt-1 pl-0.5 font-['Liberation_Sans',sans-serif] text-[21px] leading-[14px] text-white">sub-head text-1</p>
        </div>
      </div>
      <div className="mt-[42px] flex h-[21px] items-center border-t border-[#2b2b2b] pl-[3px] text-[#bcbcbc]">
        <Select label="Magnification" value="(46.6%)" className="w-[61px]" textClass="pl-1 text-[11px]" />
        <span className="w-2.5" />
        <Select label="Resolution" value="Full" className="w-[75px]" />
        <div className="ml-1.5 flex items-center">
          <Sep />
          <button aria-label="Fast previews" className="ml-1.5"><Svg size={14}><path d="M14 10V2H1v12h8M8.5 3.5L5.5 8H9l-2 4" /><path d="M10 12h6l-3 4z" fill="currentColor" stroke="none" /></Svg></button>
          <button aria-label="Transparency grid" className="ml-[5px]"><Svg size={14}><path d="M1 2h14v12H1z" /><path d="M3 4h2.5v2.5H3zM8 4h2.5v2.5H8zM5.5 6.5H8V9H5.5zM10.5 6.5H13V9h-2.5zM3 9h2.5v3H3zM8 9h2.5v3H8z" fill="currentColor" stroke="none" /></Svg></button>
          <button aria-label="Mask visibility" className="ml-[5px] bg-[#171717] text-[#3f8bdc]"><Svg size={14}><path d="M2 13C2 7 4 4 8 3h6v10z" /><path d="M0 11.5h3v3H0zM12.5 11.5h3v3h-3zM12.5 1.5h3v3h-3z" fill="currentColor" stroke="none" /></Svg></button>
          <button aria-label="Region of interest" className="ml-[5px]"><Svg size={14}><path d="M1 2h14v12H1z" /><path d="M4.5 5.5h7v5h-7z" fill="currentColor" stroke="none" /></Svg></button>
          <button aria-label="Guides" className="ml-[5px]"><Svg size={14}><path d="M2 3h12v8H2zM8 0v14M0 7h16" strokeWidth="1.3" /><path d="M10 12h6l-3 4z" fill="currentColor" stroke="none" /></Svg></button>
          <span className="w-[7px]" />
          <Sep />
          <button aria-label="Channels" className="ml-1.5">
            <Svg size={14}>
              <g stroke="none"><circle cx="7.5" cy="4.5" r="3.6" fill="#e11" /><circle cx="4.5" cy="9" r="3.6" fill="#2a2" /><circle cx="10.5" cy="9" r="3.6" fill="#35e" /><path d="M10 12h6l-3 4z" fill="#bcbcbc" /></g>
            </Svg>
          </button>
          <button aria-label="Reset exposure" className="ml-1.5"><Svg size={13}><circle cx="8" cy="8" r="5" strokeWidth="5" /><path d="M8 0l3 7M16 7l-6 3M12 15L7 11M4 15l1-7M0 6l7-1" stroke="#232323" strokeWidth="1.2" /></Svg></button>
          <button className={clsx("ml-1 w-[22px] text-left text-[11px]", BLUE)}>+0.0</button>
          <span className="w-3" />
          <Sep />
          <button aria-label="Take snapshot" className="ml-[5px]"><Svg size={14}><path fillRule="evenodd" d="M0 4h4l1-2h6l1 2h4v10H0zM8 6a3 3 0 100 6 3 3 0 000-6z" fill="currentColor" stroke="none" /></Svg></button>
          <button aria-label="Show snapshot" className="ml-1.5 text-[#484848]"><Svg size={14}><circle cx="7" cy="10" r="4" /><path d="M8 4c2-2 6-2 7 1M12 9l3-4" /></Svg></button>
          <span className="w-1.5" />
          <Sep />
          <button className="ml-[3px] h-[17px] w-[62px] border border-[#2f2f2f] bg-[#1f1f1f] leading-[15px] text-[#8c8c8c]">0:00:00:00</button>
          <span className="w-1" />
          <Sep />
        </div>
      </div>
    </section>
  );
}

// ---------- timeline ----------

const LAYERS = ["CONTROL", "Heading", "Sub-Heading_1", "Sub-Heading_2", "Sub-Heading_3", "Sub-Heading_4"];

function Eye() {
  return (
    <svg width="11" height="8" viewBox="0 0 11 8" aria-label="Visible">
      <path d="M0 4C2.5-1 8.5-1 11 4 8.5 9 2.5 9 0 4z" fill="#c4c4c4" />
      <circle cx="5.5" cy="4" r="2.5" fill="#232323" />
      <circle cx="5.5" cy="4" r="1" fill="#c4c4c4" />
    </svg>
  );
}

function Shy() {
  return <Svg size={12}><path d="M3 7a5 5 0 0110 0v2H3zM1 8.5h14v2H1z" fill="currentColor" stroke="none" /><path d="M8 2v12M4 10v4M12 10v4M1 14.5h5M10 14.5h5M6.5 14.500h3" strokeWidth="1.6" /><path d="M6 4.500v3M10 4.500v3" stroke="#2e2e2e" strokeWidth="1" /></Svg>;
}

function Sun({ className }: { className?: string }) {
  return <Svg size={10} className={className}><circle cx="8" cy="8" r="3" strokeWidth="2" /><path d="M8 0v3M8 13v3M0 8h3M13 8h3M2.5 2.5l2 2M11.5 11.5l2 2M13.5 2.5l-2 2M4.5 11.5l-2 2" /></Svg>;
}

function Fx() {
  return <span className={clsx(SERIF, "text-[13px] leading-3 italic")}>fx</span>;
}

function MotionBlur({ size = 12 }: { size?: number }) {
  return <Svg size={size}><path d="M8 3L3 8a4 4 0 006 6" strokeWidth="2" /><circle cx="10" cy="6" r="4.5" fill="#777" strokeWidth="1.5" /></Svg>;
}

function FrameBlend({ size = 12 }: { size?: number }) {
  return <Svg size={size}><path d="M1 3h2v11h9v2H1z" fill="currentColor" stroke="none" /><path d="M4 0h11v13H4z" fill="currentColor" stroke="none" /><path d="M6 3h7M6 6h7M6 9h7" stroke="#555" /></Svg>;
}

function Slot({ children, box }: { children?: ReactNode; box?: boolean }) {
  return (
    <span className="flex h-[13px] w-[13px] shrink-0 items-center justify-center">
      {box ? <span className="h-[13px] w-[11px] bg-[#232323]" /> : children}
    </span>
  );
}

function LayerRow({ name, index }: { name: string; index: number }) {
  const isNull = index === 0;
  const selected = index === 1;
  return (
    <tr className={clsx("border-b border-[#262626]", selected ? "bg-[#464646]" : "bg-[#2e2e2e]")}>
      <td className="p-0">
        <div className="flex pl-[3px]">
          {isNull ? <Slot box /> : <Slot><Eye /></Slot>}
          <Slot />
          {isNull ? <Slot /> : <Slot box />}
          <Slot box />
        </div>
      </td>
      <td className="p-0">
        <div className="flex h-[13px] items-center pl-0.5 text-[#b8b8b8]">
          <Chevron className="-rotate-90" />
          <span className={clsx("ml-1 h-3 w-[11px]", isNull ? "bg-[#b03a3a]" : "bg-[#e3d84c]")} />
          <span className="ml-[7px] leading-[13px]">{index + 1}</span>
        </div>
      </td>
      <td className="p-0">
        <div className="flex h-[13px] items-center pl-0.5 leading-[13px] text-[#bcbcbc]">
          {isNull ? (
            <>
              <span className="size-[11px] bg-white" />
              <Svg size={10} className="ml-1 text-[#4fb9b4]"><path d="M5 1v14M11 1v14M1 5h14M1 11h14" strokeWidth="2" /></Svg>
              <span className="pl-1.5">{name}</span>
            </>
          ) : (
            <>
              <span className={clsx(SERIF, "w-3.5 pl-px text-[12px] font-bold")}>T</span>
              <span className={clsx("flex-1 pl-1", selected && "bg-[#9c9c9c] text-[#303030]")}>{name}</span>
            </>
          )}
        </div>
      </td>
      <td className="p-0">
        <div className="flex pl-[5px] text-[#b0b0b0]">
          <Slot><Shy /></Slot>
          {isNull ? <Slot box /> : <Slot><Sun className="text-[#8c8c8c]" /></Slot>}
          <Slot><Svg size={11}><path d="M1 15L15 1" strokeWidth="2" /></Svg></Slot>
          <Slot><Fx /></Slot>
          <Slot />
          <Slot box />
          <Slot box />
          <Slot box />
        </div>
      </td>
      <td className="p-0">
        <div className="flex items-center pl-1.5 text-[#b0b0b0]">
          <Svg size={12}><path d="M12 13A7 7 0 114 2.5a6 6 0 019 5c0 4-7 5-8 1s4-4 4-1" strokeWidth="1.5" /></Svg>
          <Select label={`${name} parent`} value="None" className="ml-[3px] h-[14px]! w-[77px] border-0" />
        </div>
      </td>
    </tr>
  );
}

function LayerTable() {
  return (
    <table className="h-[105px] w-full table-fixed border-collapse">
      <colgroup>
        <col className="w-[60px]" />
        <col className="w-14" />
        <col />
        <col className="w-[120px]" />
        <col className="w-[117px]" />
      </colgroup>
      <thead>
        <tr className="h-[15px] text-left text-[9px] text-[#999]">
          <th className="p-0 font-normal">
            <span className="flex pl-[3px]">
              <Slot><Eye /></Slot>
              <Slot><Svg size={11} className="text-[#bcbcbc]"><path d="M1 5h3l4-4v14l-4-4H1z" fill="currentColor" stroke="none" /><path d="M10 4c3 2 3 6 0 8M12 1c5 4 5 10 0 14" /></Svg></Slot>
              <Slot><span className="size-[6px] rounded-full bg-[#bcbcbc]" /></Slot>
              <Slot><Svg size={11} className="text-[#bcbcbc]"><path d="M5 7V4a3 3 0 016 0v3" strokeWidth="2" /><path d="M2 7h12v9H2z" fill="currentColor" stroke="none" /></Svg></Slot>
            </span>
          </th>
          <th className="p-0 font-normal"><span className="flex items-center gap-2.5 pl-2.5"><TagIcon />#</span></th>
          <th className="border-l border-[#303030] p-0 pl-1 font-normal">Layer Name</th>
          <th className="p-0 font-normal">
            <span className="flex pl-[5px] text-[#b0b0b0]">
              <Slot><Shy /></Slot>
              <Slot><Sun /></Slot>
              <Slot><Svg size={11}><path d="M1 1l14 14" strokeWidth="2" strokeDasharray="7 2" /></Svg></Slot>
              <Slot><Fx /></Slot>
              <Slot><FrameBlend /></Slot>
              <Slot><MotionBlur /></Slot>
              <Slot><Svg size={11}><circle cx="8" cy="8" r="6.5" /><path d="M12.5 3.5a6.5 6.5 0 01-9 9z" fill="currentColor" /></Svg></Slot>
              <Slot><Svg size={11}><path d="M8 1l6 3.5v7L8 15l-6-3.5v-7zM2 4.5L8 8l6-3.5M8 8v7" /></Svg></Slot>
            </span>
          </th>
          <th className="border-l border-[#303030] p-0 pl-1.5 font-normal">Parent &amp; Link</th>
        </tr>
      </thead>
      <tbody>
        {LAYERS.map((name, i) => (
          <LayerRow key={name} name={name} index={i} />
        ))}
      </tbody>
    </table>
  );
}

const SECONDS = ["01s", "02s", "03s", "04s", "05s", "06s", "07s", "08s", "09s", "10s"];

function Tracks() {
  return (
    <div className="flex min-w-0 flex-1">
      <div className="relative flex min-w-0 flex-1 flex-col pt-7">
        <div className="flex h-2.5 items-center bg-[#161616]">
          <span className="h-2 w-1.5 rounded-l-full bg-[#3f8bdc]" />
          <span className="h-2 flex-1 bg-[#686868]" />
          <span className="h-2 w-1.5 rounded-r-full bg-[#3f8bdc]" />
        </div>
        {/* one cell per second, the label hangs on the tick at its right end */}
        <div className="flex h-[17px] px-1.5 text-[#999]">
          {SECONDS.map((s, i) => (
            <div key={s} className="relative flex-1">
              {i === 0 && <span className="absolute top-0 -left-1.5">0:00s</span>}
              <span className="absolute top-0 right-0 translate-x-1/2">{s}</span>
              <span className="absolute right-0 bottom-0 h-1 w-px bg-[#999]" />
            </div>
          ))}
        </div>
        <div className="flex h-[14px]">
          <span className="w-[5px] rounded-l-full bg-[#3f8bdc]" />
          <span className="flex-1 bg-[#606060]" />
          <span className="w-1.5 rounded-r-full bg-[#3f8bdc]" />
        </div>
        <div className="h-1 bg-[#191919] pl-1.5"><span className="block h-[3px] w-1.5 bg-[#2fa84a]" /></div>
        <div className="flex min-h-0 flex-1 flex-col pl-1.5">
          <div className="flex h-[89px] flex-col">
            {LAYERS.map((name, i) => (
              <div key={name} className={clsx("flex-1 border-b pr-1.5", i === 1 ? "border-[#5c5c3a] bg-[#464646]" : "border-[#3d3c28] bg-[#2e2e2e]")}>
                <div className={clsx("h-full", i === 0 ? "bg-[#7c383b]" : i === 1 ? "bg-[#d3c748]" : "bg-[#8e8944]")} />
              </div>
            ))}
          </div>
          <div className="mr-1.5 flex-1 bg-[#323232]" />
        </div>
        <div className="pointer-events-none absolute top-[38px] bottom-0 left-0 flex w-3 flex-col items-center">
          <svg width="10" height="13" viewBox="0 0 10 13" fill="#3f8bdc" className="shrink-0"><path d="M0 0h10v6l-5 7-5-7z" /></svg>
          <span className="w-px flex-1 bg-[#4a7296]" />
        </div>
      </div>
      <div className="flex w-4 flex-col items-center gap-1.5 pt-[55px] text-[#bcbcbc]">
        <button aria-label="Add marker"><svg width="10" height="13" viewBox="0 0 10 13" fill="currentColor"><path d="M0 0h10v9l-5 4-5-4z" /></svg></button>
        <button aria-label="Composition flow">
          <svg width="13" height="11" viewBox="0 0 13 11" fill="currentColor"><path fillRule="evenodd" d="M5 2h8v8H9a3 3 0 11-5-3L0 7l5-5zM7 5.5a2 2 0 100 4 2 2 0 000-4z" /><path d="M0 5l6-5v5z" /></svg>
        </button>
      </div>
    </div>
  );
}

function Timeline() {
  return (
    <section className="flex min-h-[363px] flex-1 flex-col bg-[#232323] pl-0.5">
      <div className="flex min-h-0 flex-1">
        <div className="flex w-[626px] shrink-0 flex-col border-r border-[#161616] whitespace-nowrap">
          <div className="flex h-[23px] items-center pl-2">
            <div className="flex h-[23px] w-[162px] items-center border-b-2 border-[#c4c4c4] text-[#c8c8c8]">
              <button aria-label="Close tab"><X size={7} /></button>
              <span className="ml-1.5 h-[9px] w-2.5 bg-[#a8977a]" />
              <span className="ml-2.5 flex-1">3 Text Test_4k_landscape</span>
              <PanelMenu />
            </div>
            <span className="ml-[31px] h-[9px] w-2.5 bg-[#a8977a]" />
            <span className="ml-[9px] text-[#8c8c8c]">3. Position Opacity</span>
          </div>
          <div className="flex h-[34px]">
            <div className="w-[92px] pt-1 pl-2">
              <button className={clsx("block pl-1 text-[13px] leading-[14px] font-bold", BLUE)}>0:00:00:00</button>
              <p className="text-[9px] leading-[14px] text-[#26518a]">00000 (25.00 fps)</p>
            </div>
            <label className="mt-2 flex h-[17px] w-[386px] items-center border border-[#2c2c2c] bg-[#151515] pl-[5px]">
              <SearchIcon />
              <input aria-label="Search layers" className="min-w-0 flex-1 bg-transparent outline-none" />
            </label>
            <div className="ml-3.5 flex items-center text-[#bcbcbc]">
              <button aria-label="Mini-flowchart" className="w-[30px]"><Svg><path d="M0 4h8M8 4v8h4M8 6h4" strokeWidth="1.5" /><path d="M2 2h4v4H2zM11 4h4v4h-4zM12 10h4v4h-4z" fill="currentColor" stroke="none" /></Svg></button>
              <button aria-label="Hide shy layers" className="w-[23px]"><Svg size={14}><path d="M2 7a6 6 0 0112 0zM0 8h16v7H0z" fill="currentColor" stroke="none" /><path d="M8 2v12M4.5 10v4M11.5 10v4" stroke="#333" /></Svg></button>
              <button aria-label="Frame blending" className="w-[23px]"><FrameBlend size={14} /></button>
              <button aria-label="Motion blur" className="w-[30px]"><MotionBlur size={14} /></button>
              <button aria-label="Graph editor"><Svg size={15}><path d="M1.5 1.5h13v13h-13zM4 4c4 0 4 8 8 8" /></Svg></button>
            </div>
          </div>
          <LayerTable />
        </div>
        <div className="flex min-w-0 flex-1"><Tracks /></div>
      </div>
      <footer className="flex h-4 shrink-0 items-center border-t border-[#1b1b1b] text-[#a0a0a0]">
        <div className="flex w-[626px] shrink-0 items-center pl-[5px]">
          <button aria-label="Expand layer switches" className="w-[17px] text-[#3f8bdc]"><Svg size={12}><path d="M1 1h9v9H1z" fill="currentColor" /><circle cx="10" cy="10" r="4" fill="#232323" /><path d="M10 8v4M8 10h4" /></Svg></button>
          <button aria-label="Expand transfer controls" className="w-[17px]"><Svg size={12}><path d="M2 2h8v8H2z" strokeWidth="2" /><circle cx="10" cy="10" r="4.5" strokeWidth="2" /></Svg></button>
          <button aria-label="Expand in/out" className="w-[17px]"><Svg size={12}><path d="M6 1H4v5L2 8l2 2v5h2zM10 1h2v5l2 2-2 2v5h-2z" fill="currentColor" /></Svg></button>
          <button aria-label="Expand render time" className="w-[17px]"><Svg size={12}><path d="M1 9a5 5 0 019-4v5h5v3H1zM12 2h2v6h-2z" fill="currentColor" /></Svg></button>
          <span className="ml-[18px]">Frame Render Time:</span>
          <span className="ml-1.5 font-bold text-[#5fd0a5]">24ms</span>
          <button className="mr-[117px] ml-auto h-[15px] w-[118px] border-x border-[#2c2c2c]">Toggle Switches / Modes</button>
        </div>
        <div className="flex items-center gap-2 pl-[5px] text-[#bcbcbc]">
          <svg width="8" height="4" viewBox="0 0 8 4" fill="currentColor"><path d="M0 4l2.5-2L5 0l3 4z" /></svg>
          <input
            type="range"
            aria-label="Timeline zoom"
            defaultValue="0"
            className="h-2.5 w-11 appearance-none bg-[linear-gradient(#555,#555)] bg-[length:100%_2px] bg-center bg-no-repeat [&::-webkit-slider-thumb]:size-[9px] [&::-webkit-slider-thumb]:appearance-none [&::-webkit-slider-thumb]:rounded-full [&::-webkit-slider-thumb]:border-2 [&::-webkit-slider-thumb]:border-[#999] [&::-webkit-slider-thumb]:bg-[#232323]"
          />
          <svg width="14" height="7" viewBox="0 0 14 7" fill="currentColor"><path d="M0 7l4-4 1 1 4-4 5 7z" /></svg>
        </div>
      </footer>
    </section>
  );
}

export default function App() {
  return (
    <div className={clsx(UI, "flex min-h-screen min-w-[1500px] flex-col bg-[#171717] text-[10px] leading-[14px]")}>
      <TitleBar />
      <Toolbar />
      <main className="mt-px flex">
        <div className="ml-0.5 flex w-[467px] shrink-0 flex-col">
          <ProjectPanel />
          <div className="mt-[3px] flex h-7 items-center bg-[#232323] pl-2">
            <div className="flex h-6 w-10 items-center justify-between self-start border-b-2 border-[#c4c4c4] pt-px pl-0.5 text-[#c8c8c8]">
              Void <PanelMenu />
            </div>
            <span className="mb-1 ml-[19px] text-[#8c8c8c]">Keyframe Wingman</span>
          </div>
          <div className="mt-1"><ParagraphPanel /></div>
          <div className="mt-1"><AlignPanel /></div>
        </div>
        <div className="ml-1 flex w-[542px] shrink-0 flex-col gap-[3px]">
          <CharacterPanel />
          <EssentialGraphicsPanel />
        </div>
        <div className="ml-1 flex min-w-0 flex-1 pr-0.5"><ViewerPanel /></div>
      </main>
      <div className="mt-1 flex flex-1 flex-col"><Timeline /></div>
    </div>
  );
}
